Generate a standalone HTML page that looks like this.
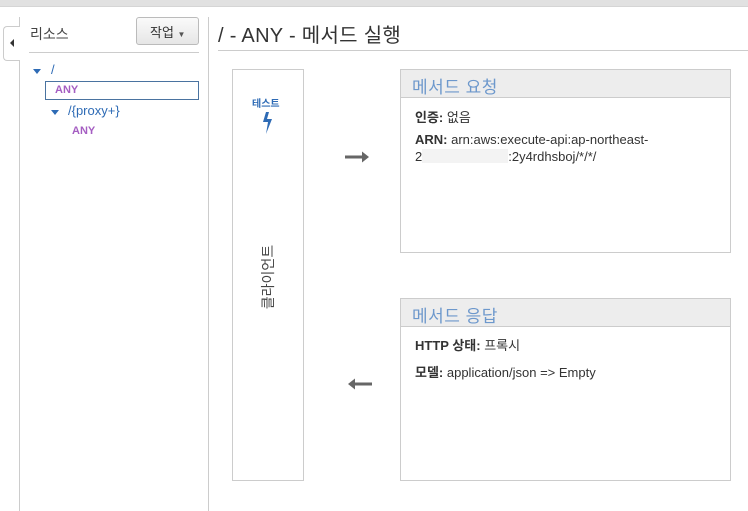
<!DOCTYPE html>
<html><head><meta charset="utf-8"><style>
*{margin:0;padding:0;box-sizing:border-box}
body{width:748px;height:511px;overflow:hidden;background:#fff;font-family:"Liberation Sans","Noto Sans CJK KR",sans-serif;color:#333;position:relative}
.a{position:absolute}
.box{position:absolute;left:400px;width:331px;border:1px solid #ccc;background:#fff}
.box .h{height:28px;background:#ededed;border-bottom:1px solid #ccc;color:#6d98cc;font-size:17px;padding:3px 0 0 11px;letter-spacing:0.5px}
.box .r{font-size:13px;padding-left:14px;color:#333}
b{font-weight:bold;color:#333}
.tri{width:0;height:0;border-left:4px solid transparent;border-right:4px solid transparent;border-top:5px solid #2e6bb5}
</style></head><body>
<div class="a" style="left:0;top:0;width:748px;height:7px;background:#e1e1e1;border-bottom:1px solid #d5d5d5"></div>
<div class="a" style="left:19px;top:17px;width:1px;height:494px;background:#ccc"></div>
<div class="a" style="left:3px;top:26px;width:17px;height:35px;border:1px solid #ccc;border-right:none;border-radius:4px 0 0 4px;background:#fff"></div>
<div class="a" style="left:10px;top:39px;width:0;height:0;border-top:4px solid transparent;border-bottom:4px solid transparent;border-right:4px solid #333"></div>
<div class="a" style="left:208px;top:17px;width:1px;height:494px;background:#ccc"></div>
<div class="a" style="left:30px;top:24px;font-size:14px;color:#444">리소스</div>
<div class="a" style="left:136px;top:17px;width:63px;height:28px;border:1px solid #bbb;border-radius:3px;background:linear-gradient(#fafafa,#e6e6e6);font-size:13px;padding:4px 0 0 13px;color:#333">작업 <span style="font-size:8px;color:#555">▼</span></div>
<div class="a" style="left:29px;top:52px;width:170px;height:1px;background:#ccc"></div>
<div class="a tri" style="left:33px;top:69px"></div>
<div class="a" style="left:51px;top:62px;font-size:13px;color:#2e6bb5">/</div>
<div class="a" style="left:45px;top:81px;width:154px;height:19px;border:1px solid #4a73a0"></div>
<div class="a" style="left:55px;top:84px;font-size:11px;font-weight:bold;color:#a55ec2">ANY</div>
<div class="a tri" style="left:51px;top:110px"></div>
<div class="a" style="left:68px;top:103px;font-size:13px;color:#2e6bb5">/{proxy+}</div>
<div class="a" style="left:72px;top:125px;font-size:11px;font-weight:bold;color:#a55ec2">ANY</div>
<div class="a" style="left:218px;top:19px;font-size:20px;color:#333;letter-spacing:0.3px">/ - ANY - 메서드 실행</div>
<div class="a" style="left:218px;top:50px;width:530px;height:1px;background:#ccc"></div>
<div class="a" style="left:232px;top:69px;width:72px;height:412px;border:1px solid #ccc"></div>
<div class="a" style="left:252px;top:95px;font-size:10px;font-weight:bold;color:#2e6bb5">테스트</div>
<svg class="a" style="left:261px;top:112px" width="12" height="22" viewBox="0 0 12 22"><path d="M5 0 L2 10 L7 10 L5 22 L11 7 L6 7 L8 0Z" fill="#2e6bb5"/></svg>
<div class="a" style="left:234px;top:267px;width:68px;text-align:center;font-size:14px;color:#444;transform:rotate(-90deg)">클라이언트</div>
<svg class="a" style="left:345px;top:151px" width="26" height="12"><path d="M0 4.5h17v-4l7 5.5-7 5.5v-4H0z" fill="#666"/></svg>
<svg class="a" style="left:346px;top:378px" width="26" height="12"><path d="M26 4.5H9v-4L2 6l7 5.5v-4h17z" fill="#666"/></svg>
<div class="box" style="top:69px;height:184px"><div class="h">메서드 요청</div>
<div class="r" style="margin-top:9px"><b>인증:</b> 없음</div>
<div class="r" style="margin-top:5px;line-height:17px"><b>ARN:</b> arn:aws:execute-api:ap-northeast-<br>2<span style="display:inline-block;width:86px;height:14px;background:#f3f3f3;vertical-align:-2px"></span>:2y4rdhsboj/*/*/</div>
</div>
<div class="box" style="top:298px;height:183px"><div class="h">메서드 응답</div>
<div class="r" style="margin-top:8px"><b>HTTP 상태:</b> 프록시</div>
<div class="r" style="margin-top:8px"><b>모델:</b> application/json =&gt; Empty</div>
</div>
</body></html>
